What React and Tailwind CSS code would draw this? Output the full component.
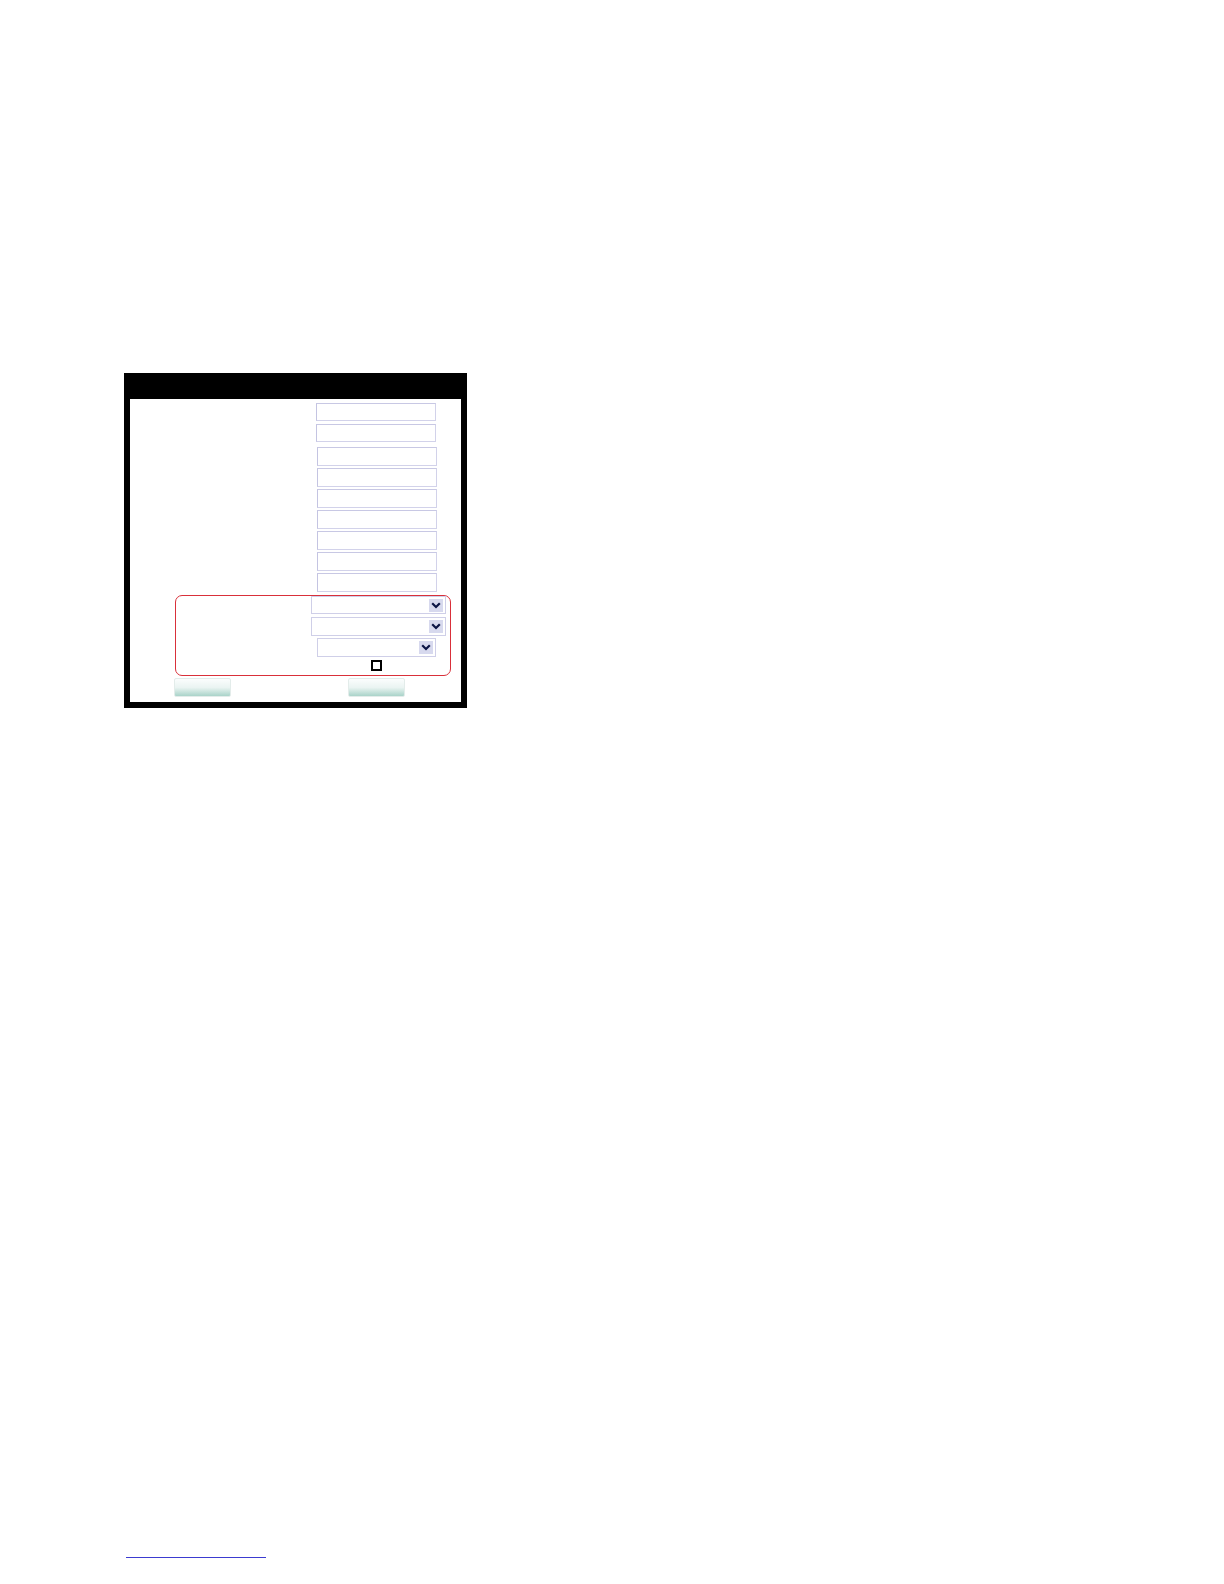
import React from 'react';

function Field({ className = '' }) {
  return (
    <div
      className={`bg-white border border-[#d2d2ea] border-l-[#c4c4e2] border-t-[#c8c8e4] ${className}`}
    />
  );
}

function Select({ className = '' }) {
  return (
    <div
      className={`flex items-center justify-end pr-[2px] bg-white border border-[#cfcfe8] ${className}`}
    >
      <span className="flex items-center justify-center w-[14px] h-[13px] bg-[#d7d9ee]">
        <svg width="10" height="7" viewBox="0 0 10 7">
          <path d="M1.2 1.2 L5 5 L8.8 1.2" fill="none" stroke="#0b1445" strokeWidth="2.2" />
        </svg>
      </span>
    </div>
  );
}

function Button({ className = '' }) {
  return (
    <div
      className={`w-[57px] h-[19px] rounded-[2px] border border-[#e3ecea] bg-gradient-to-b from-[#fbfdfd] via-[#eaf4f2] to-[#a9d3c9] ${className}`}
    />
  );
}

export default function App() {
  return (
    <div className="bg-white font-['Liberation_Sans',sans-serif] pb-[20px]">
      <div className="pt-[373px] pl-[124px]">
        {/* form frame */}
        <div className="w-[343px] bg-black pt-[26px] px-[6px] pb-[6px]">
          <div className="bg-white h-[303px] flex flex-col">
            <Field className="ml-[186px] mt-[4px] w-[120px] h-[18px]" />
            <Field className="ml-[186px] mt-[3px] w-[120px] h-[18px]" />
            <Field className="ml-[187px] mt-[5px] w-[120px] h-[19px]" />
            <Field className="ml-[187px] mt-[2px] w-[120px] h-[19px]" />
            <Field className="ml-[187px] mt-[2px] w-[120px] h-[19px]" />
            <Field className="ml-[187px] mt-[2px] w-[120px] h-[19px]" />
            <Field className="ml-[187px] mt-[2px] w-[120px] h-[19px]" />
            <Field className="ml-[187px] mt-[2px] w-[120px] h-[19px]" />
            <Field className="ml-[187px] mt-[2px] w-[120px] h-[19px]" />

            {/* outlined group */}
            <div className="ml-[45px] mt-[3px] w-[276px] h-[81px] border border-[#d9303a] rounded-[7px] flex flex-col">
              <Select className="ml-[135px] mt-0 w-[135px] h-[18px]" />
              <Select className="ml-[135px] mt-[3px] w-[135px] h-[19px]" />
              <Select className="ml-[141px] mt-[2px] w-[119px] h-[19px]" />
              <div className="ml-[195px] mt-[3px] w-[11px] h-[11px] border-2 border-black bg-white" />
            </div>

            <div className="flex mt-[2px] ml-[44px] gap-[117px]">
              <Button />
              <Button />
            </div>
          </div>
        </div>
      </div>
      <div className="ml-[126px] mt-[849px] w-[140px] h-px bg-[#3b3bd0]" />
    </div>
  );
}
